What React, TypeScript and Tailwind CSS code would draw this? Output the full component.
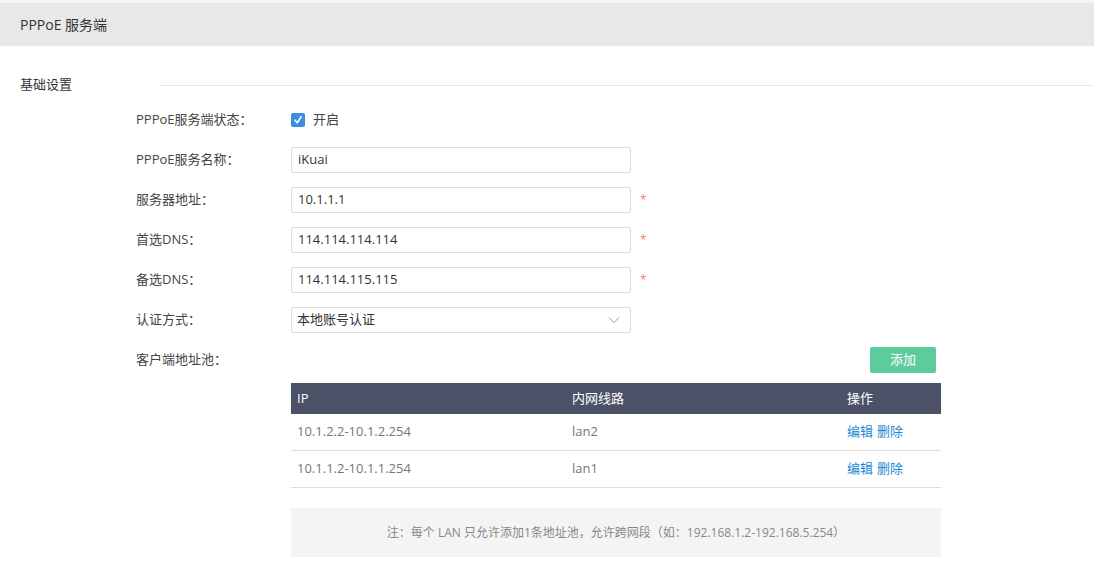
import React from 'react';

const font = { fontFamily: '"Open Sans", "Noto Sans CJK SC", sans-serif' };

type FieldProps = {
  label: string;
  children: React.ReactNode;
  required?: boolean;
};

const Field: React.FC<FieldProps> = ({ label, children, required = false }) => (
  <div className="flex items-center h-[40px]">
    <div className="w-[155px] text-[13px] text-[#444]">{label}</div>
    {children}
    {required && <span className="ml-[9px] text-[12px] text-[#f77] leading-none">*</span>}
  </div>
);

const TextInput: React.FC<{ value: string }> = ({ value }) => (
  <div className="w-[340px] h-[26px] border border-[#dcdcdc] rounded-[2px] px-[6px] flex items-center text-[13px] text-[#333]">
    {value}
  </div>
);

const pools = [
  { ip: '10.1.2.2-10.1.2.254', lan: 'lan2' },
  { ip: '10.1.1.2-10.1.1.254', lan: 'lan1' },
];

export default function App() {
  return (
    <div className="w-full min-h-[568px] bg-white" style={font}>
      <div className="h-[3px] bg-[#f3f3f3]" />
      <div className="h-[43px] bg-[#e8e8e8] px-5 flex items-center text-[14px] text-[#333]">
        PPPoE 服务端
      </div>

      <div className="mt-[29px] flex items-center h-[20px]">
        <div className="w-[160px] pl-5 text-[13px] text-[#333]">基础设置</div>
        <div className="flex-1 h-px bg-[#e8e8e8]" />
      </div>

      <div className="mt-[5px] pl-[136px]">
        <Field label="PPPoE服务端状态：">
          <div className="flex items-center">
            <div className="w-[14px] h-[14px] rounded-[2px] bg-[#3d8ee0] flex items-center justify-center">
              <svg width="10" height="10" viewBox="0 0 10 10">
                <path d="M2 5.2 L4.2 7.8 L8.2 1.8" stroke="white" strokeWidth="1.6" fill="none" strokeLinecap="round" strokeLinejoin="round" />
              </svg>
            </div>
            <span className="ml-[8px] text-[13px] text-[#444]">开启</span>
          </div>
        </Field>
        <Field label="PPPoE服务名称：">
          <TextInput value="iKuai" />
        </Field>
        <Field label="服务器地址：" required>
          <TextInput value="10.1.1.1" />
        </Field>
        <Field label="首选DNS：" required>
          <TextInput value="114.114.114.114" />
        </Field>
        <Field label="备选DNS：" required>
          <TextInput value="114.114.115.115" />
        </Field>
        <Field label="认证方式：">
          <div className="w-[340px] h-[26px] border border-[#dcdcdc] rounded-[2px] pl-[5px] pr-[10px] flex items-center justify-between text-[13px] text-[#333]">
            <span>本地账号认证</span>
            <svg width="12" height="8" viewBox="0 0 12 8">
              <path d="M1 1.5 L6 6.5 L11 1.5" stroke="#999" strokeWidth="1" fill="none" />
            </svg>
          </div>
        </Field>

        <div className="flex items-start">
          <div className="w-[155px] h-[40px] flex items-center text-[13px] text-[#444]">客户端地址池：</div>
          <div className="w-[650px] pt-[7px]">
            <div className="flex justify-end pr-[5px]">
              <button className="w-[66px] h-[26px] rounded-[2px] bg-[#5ccc9c] text-white text-[13px]">添加</button>
            </div>
            <div className="mt-[10px]">
              <div className="h-[31px] bg-[#4b5166] flex items-center text-[13px] text-white">
                <div className="w-[275px] px-[6px]">IP</div>
                <div className="w-[275px] px-[6px]">内网线路</div>
                <div className="flex-1 px-[6px]">操作</div>
              </div>
              {pools.map((p) => (
                <div key={p.ip} className="h-[37px] border-b border-[#dedede] flex items-center text-[13px] text-[#777]">
                  <div className="w-[275px] px-[6px]">{p.ip}</div>
                  <div className="w-[275px] px-[6px]">{p.lan}</div>
                  <div className="flex-1 px-[6px] text-[#1a8ad4] flex gap-[4px]">
                    <span>编辑</span>
                    <span>删除</span>
                  </div>
                </div>
              ))}
            </div>
            <div className="mt-[20px] h-[49px] bg-[#f4f4f4] flex items-center justify-center text-[12px] text-[#888]">
              注：每个 LAN 只允许添加1条地址池，允许跨网段（如：192.168.1.2-192.168.5.254）
            </div>
          </div>
        </div>
      </div>
    </div>
  );
}
